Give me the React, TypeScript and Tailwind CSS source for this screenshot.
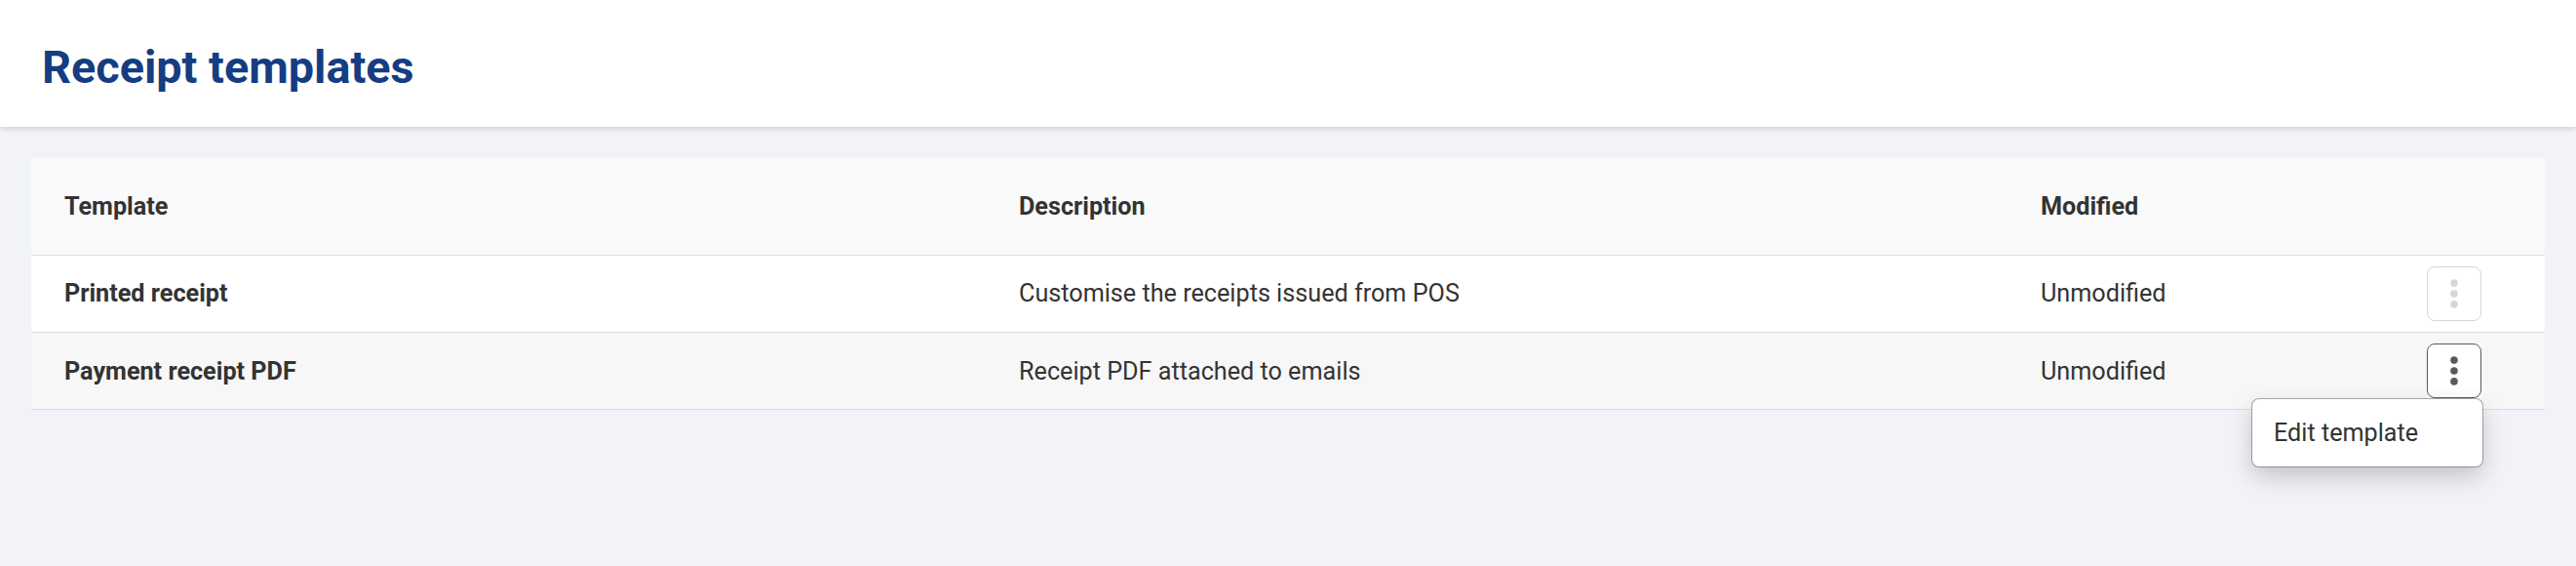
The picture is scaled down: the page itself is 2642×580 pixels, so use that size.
import clsx from "clsx";

interface Template {
  name: string;
  description: string;
  status: string;
  editable: boolean;
}

const templates: Template[] = [
  {
    name: "Printed receipt",
    description: "Customise the receipts issued from POS",
    status: "Unmodified",
    editable: false,
  },
  {
    name: "Payment receipt PDF",
    description: "Receipt PDF attached to emails",
    status: "Unmodified",
    editable: true,
  },
];

const columns = "grid grid-cols-[979px_1048px_396px_1fr] pl-[34px]";

const MoreIcon = ({ className }: { className?: string }) => (
  <svg className={className} width="8" height="30" viewBox="0 0 8 30" fill="currentColor">
    <circle cx="4" cy="4.1" r="3.8" />
    <circle cx="4" cy="15" r="3.8" />
    <circle cx="4" cy="25.9" r="3.8" />
  </svg>
);

const RowMenu = ({ editable }: { editable: boolean }) => (
  <div className="relative h-14 w-14 bg-white">
    <button
      disabled={!editable}
      aria-label="Actions"
      className={clsx(
        "flex h-14 w-14 items-center justify-center rounded-lg border bg-white",
        editable
          ? "border-[#5a5a5a] text-[#5a5a5a]"
          : "border-[#d6d6d6] text-[#d6d6d6]"
      )}
    >
      <MoreIcon className={editable ? "" : "mb-px"} />
    </button>
    {editable && (
      <div className="absolute top-[57px] -right-px z-10 w-[236px] rounded-[7px] bg-white py-4 pl-[22px] leading-[37px] shadow-[0_0_0_1px_rgba(0,0,0,0.3),0_10px_24px_rgba(0,0,0,0.2)]">
        Edit template
      </div>
    )}
  </div>
);

const App = () => {
  return (
    <div className="min-h-[580px] bg-[#f1f3f8] font-[Roboto,sans-serif] text-[25.2px] text-[#333333]">
      <header className="flex h-[130px] items-center bg-white px-[43px] shadow-[0_2px_5px_rgba(0,0,0,0.14)]">
        <h1 className="pt-2 text-[46.8px] font-bold text-[#153d82]">Receipt templates</h1>
      </header>

      <main className="px-8 pt-8">
        <div
          className={clsx(
            columns,
            "h-[100px] items-center border-b border-[#dcdcde] bg-[#fafafa] font-bold"
          )}
        >
          <div>Template</div>
          <div>Description</div>
          <div>Modified</div>
        </div>

        {templates.map((template) => (
          <div
            key={template.name}
            className={clsx(
              columns,
              "h-[79px] items-center border-b border-[#dcdcde]",
              template.editable ? "bg-[#f7f7f7] *:not-last:pt-0.5" : "bg-white"
            )}
          >
            <div className="font-bold">{template.name}</div>
            <div>{template.description}</div>
            <div>{template.status}</div>
            <RowMenu editable={template.editable} />
          </div>
        ))}
      </main>
    </div>
  );
};

export default App;
